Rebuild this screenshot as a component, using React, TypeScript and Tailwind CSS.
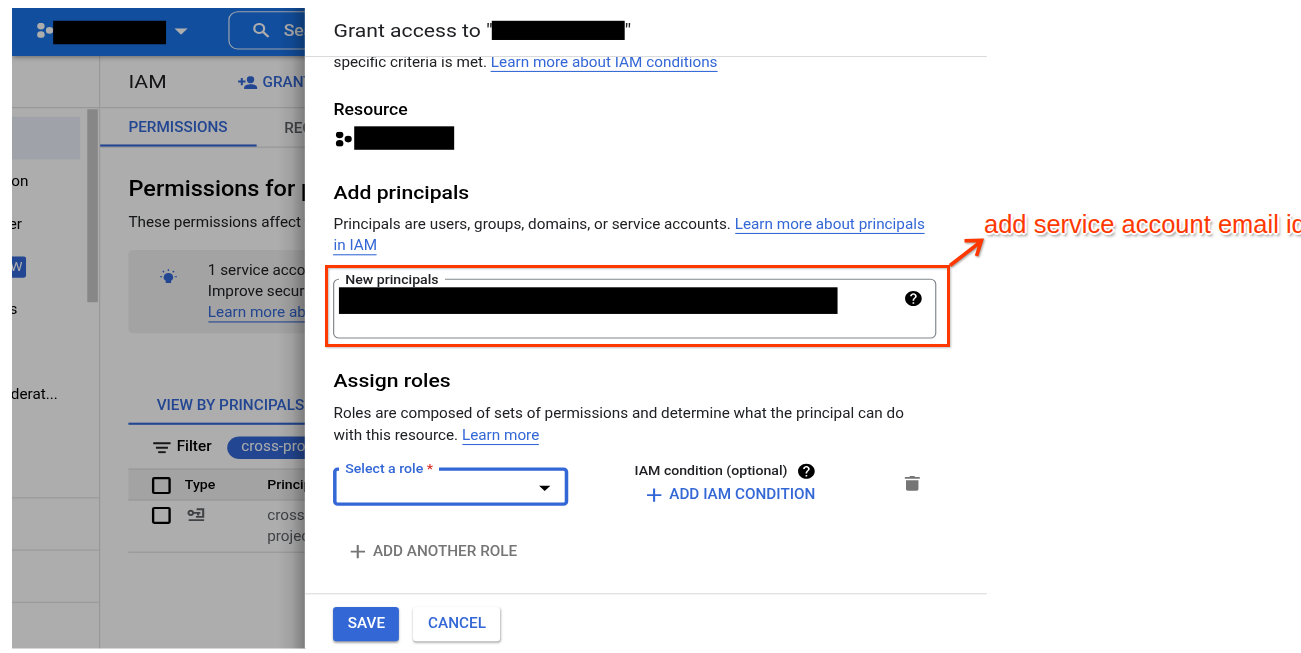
import type { ReactNode } from 'react';
import { MdHelp } from 'react-icons/md';

function ProjectIcon({ className }: { className: string }) {
  return (
    <svg viewBox="0 0 14 14" className={className} fill="currentColor">
      <circle cx="3.6" cy="3" r="3.2" />
      <circle cx="10.9" cy="7" r="3.1" />
      <circle cx="3.6" cy="11" r="3.2" />
    </svg>
  );
}

function Caret({ className }: { className: string }) {
  return (
    <svg viewBox="0 0 10 5" className={className} fill="currentColor" preserveAspectRatio="none">
      <path d="M0 0h10L5 5z" />
    </svg>
  );
}

function PlusIcon() {
  return (
    <svg viewBox="0 0 20 20" className="size-5" fill="none" stroke="currentColor" strokeWidth="1.8">
      <path d="M10 3.8v12.4M4 10h12.200" />
    </svg>
  );
}

function SearchIcon() {
  return (
    <svg viewBox="0 0 14 14" className="size-[14px]" fill="none" stroke="currentColor" strokeWidth="1.9">
      <circle cx="5.2" cy="5.2" r="4.2" />
      <path d="M8.3 8.3l4.9 4.9" strokeWidth="2.1" />
    </svg>
  );
}

function AddPersonIcon() {
  return (
    <svg viewBox="0 0 58 38" className="h-[12px] w-[16.5px]" preserveAspectRatio="none" fill="currentColor">
      <path d="M9 5h6v8h8v6h-8v8H9v-8H1v-6h8z" />
      <circle cx="38" cy="10" r="11" />
      <path d="M19 38v-4c0-7 11-10 19.500-10S58 27 58 34v4z" />
    </svg>
  );
}

function BulbIcon() {
  return (
    <svg viewBox="0 0 16 16" className="size-4 text-[#3367d6]" fill="currentColor">
      <path d="M8 4.600a4 4 0 0 0-2.300 7.300V14h4.600v-2.100A4 4 0 0 0 8 4.600z" />
      <path
        d="M8 1v1.600M3.200 2.700l1.100 1.200M12.800 2.700l-1.100 1.200M.8 8.100h1.800M13.400 8.100h1.800"
        stroke="currentColor"
        strokeWidth="1.1"
      />
    </svg>
  );
}

function FilterIcon() {
  return (
    <svg viewBox="0 0 15 11" className="h-[11px] w-[15px]" fill="none" stroke="currentColor" strokeWidth="1.9">
      <path d="M0 1.300h15M2.400 5.500h10.200M4.300 9.700h6.400" />
    </svg>
  );
}

function ServiceAccountIcon() {
  return (
    <svg viewBox="0 0 15 13" className="h-[13px] w-[15px] text-[#5f6368]" fill="none" stroke="currentColor" strokeWidth="1.8">
      <circle cx="3" cy="4.600" r="2" />
      <path d="M5 4.600h6.200M9.300 4.600v2.400M8 1.200h5.600v7.200H7.400M1.200 11.400h13.200" />
    </svg>
  );
}

function TrashIcon() {
  return (
    <svg viewBox="0 0 13 14" className="h-[14px] w-[13px] text-[#757575]" fill="currentColor">
      <path d="M0 1h4l.7-1h3.600L9 1h4v1.600H0zM1.200 4h10.600v8.300c0 .9-.7 1.600-1.600 1.600H2.800c-.9 0-1.600-.7-1.600-1.600z" />
    </svg>
  );
}

function Link({ children }: { children: ReactNode }) {
  return <a className="border-b border-[#3367d6] pb-px text-[#3367d6]">{children}</a>;
}

function TopBar() {
  return (
    <header className="relative z-10 flex h-[45px] w-[400px] shrink-0 items-start bg-[#1a73e8] text-white shadow-[0_1px_5px_rgba(0,0,0,0.5)]">
      <ProjectIcon className="mt-[14px] ml-[21px] size-[14px] shrink-0" />
      <div className="mt-[11.5px] h-[22.5px] w-[96px] shrink-0 bg-black" />
      <Caret className="mt-[19px] ml-[7px] h-[6px] w-[11.5px] shrink-0" />
      <div className="mt-[3px] ml-[34.5px] flex h-[36px] w-[200px] shrink-0 items-center rounded-lg border border-white/90 pl-[20px]">
        <SearchIcon />
        <span className="ml-[12px] text-[15px] font-medium">Search</span>
      </div>
    </header>
  );
}

function NavRow({ children, width }: { children?: ReactNode; width: string }) {
  return <div className={`flex h-10 items-center justify-end overflow-hidden pt-px text-[13px] ${width}`}>{children}</div>;
}

function SideNav() {
  return (
    <nav className="flex w-[75px] shrink-0 flex-col border-r border-[#e0e0e0]">
      <div className="h-[49px] border-b border-[#dcdcdc]" />
      <div className="flex h-[364.500px] justify-between pr-px">
        <div className="pt-2">
          <div className="h-10 w-[58px] bg-[#ebeffa]" />
          <NavRow width="w-[14px]">on</NavRow>
          <NavRow width="w-[8.5px]">er</NavRow>
          <NavRow width="w-[12px]">
            <span className="flex h-[20px] w-[24px] shrink-0 items-center justify-end rounded-[2px] bg-[#3367d6] pr-[3px] text-[12px] text-white">W</span>
          </NavRow>
          <NavRow width="w-[4.5px]">s</NavRow>
          <NavRow width="w-[39px]" />
          <NavRow width="w-[39px]">ederat...</NavRow>
        </div>
        <div className="mt-[1px] h-[181px] w-[9.5px] bg-[#c8c8c8]" />
      </div>
      <div className="h-[49px] border-t border-[#e0e0e0]" />
      <div className="h-[49px] border-t border-[#e0e0e0]" />
      <div className="grow border-t border-[#e0e0e0]" />
    </nav>
  );
}

function Checkbox() {
  return <span className="h-[16px] w-[16px] shrink-0 rounded-[2px] border-2 border-black" />;
}

function MainContent() {
  return (
    <main className="flex w-[320px] shrink-0 flex-col text-[13px] leading-5 whitespace-nowrap text-[#202124]">
      <div className="flex h-[49px] items-center border-b border-[#dcdcdc] pl-6">
        <h1 className="w-[93px] text-[18px]">IAM</h1>
        <div className="flex items-center gap-[4.5px] pt-px font-medium text-[#3367d6]">
          <AddPersonIcon />
          <span>GRANT ACCESS</span>
        </div>
      </div>
      <div className="flex h-[37px] border-b border-[#dcdcdc] font-medium">
        <div className="flex w-[132.5px] items-center border-b-2 border-[#3367d6] pt-[2px] pl-6 text-[#3367d6]">PERMISSIONS</div>
        <div className="flex items-center pt-px pl-6 text-[#5f6368]">RECOMMENDATIONS</div>
      </div>
      <div className="flex flex-col pl-6">
        <h2 className="mt-[26px] text-[20px] leading-6 font-medium text-black">Permissions for project</h2>
        <p className="mt-[10px]">These permissions affect this project</p>
        <div className="mt-[16px] flex h-[78px] rounded bg-[#f0f0f0] pt-[9px]">
          <div className="flex w-[67.500px] justify-center pt-[8px]">
            <BulbIcon />
          </div>
          <div>
            <p>1 service account</p>
            <p>Improve security</p>
            <p><Link>Learn more about</Link></p>
          </div>
        </div>
        <div className="mt-[48px] flex h-[38px] items-center border-b-2 border-[#3367d6] pt-[3px] pl-6 font-medium text-[#3367d6]">VIEW BY PRINCIPALS</div>
        <div className="flex h-[41px] items-center pt-[1.500px] pl-[20.5px]">
          <FilterIcon />
          <span className="ml-[5.5px] w-[42.500px] font-medium text-black">Filter</span>
          <span className="flex h-[21px] w-[160px] items-center rounded-full bg-[#3367d6] pl-[12.5px] text-white">cross-project</span>
        </div>
        <div className="flex h-[30px] items-center border-y border-[#dcdcdc] bg-[#f1f1f1] pl-[19.5px] text-[12px] font-medium text-black">
          <span className="flex pt-[2px]"><Checkbox /></span>
          <span className="ml-[12.500px] w-[70px]">Type</span>
          <span>Principal</span>
        </div>
        <div className="flex h-[49px] items-start border-b border-[#dcdcdc] pt-[4px] pl-[19.5px] text-[#5f6368]">
          <span className="flex pt-[2px]"><Checkbox /></span>
          <span className="ml-[14px] w-[68.500px] pt-[3px]"><ServiceAccountIcon /></span>
          <span>cross-project<br />project</span>
        </div>
      </div>
    </main>
  );
}

function GrantPanel() {
  return (
    <section className="absolute top-0 left-[249.400px] z-20 flex h-[601px] w-[579.500px] flex-col bg-white text-[13px] leading-5 whitespace-nowrap text-[#202124]">
      <header className="flex h-[46px] shrink-0 items-center border-b border-[#dadada] pr-6 pb-[3px] pl-6">
        <h2 className="text-[18px]">Grant access to &quot;</h2>
        <div className="-ml-[.500px] h-[18.5px] w-[112.500px] bg-black" />
        <span className="text-[18px]">&quot;</span>
      </header>
      <div className="flex h-[503px] shrink-0 flex-col overflow-hidden pl-6">
        <p className="-mt-[4.800px]">specific criteria is met. <Link>Learn more about IAM conditions</Link></p>
        <h4 className="mt-[24px] text-[15px] font-medium text-black">Resource</h4>
        <div className="mt-[6px] flex h-[22px] items-center text-black">
          <ProjectIcon className="mt-px ml-[1.5px] size-[14px]" />
          <div className="ml-[2px] h-[21.5px] w-[85.5px] bg-black" />
        </div>
        <h3 className="mt-[27.500px] text-[18px] leading-6 font-medium text-black">Add principals</h3>
        <p className="mt-[8.500px]">
          Principals are users, groups, domains, or service accounts. <Link>Learn more about principals</Link>
          <br />
          <Link>in IAM</Link>
        </p>
        <fieldset className="mt-[12.400px] h-[64px] w-[512.500px] rounded-[5px] border border-[#80868b] pl-[4px]">
          <legend className="px-[5px] text-[12px] leading-[18px] font-medium">New principals</legend>
          <div className="-mt-[1.300px] flex items-start justify-between pr-[10px]">
            <div className="h-[24.500px] w-[423.500px] bg-black" />
            <MdHelp className="mt-[1.500px] size-[17px] text-black" />
          </div>
        </fieldset>
        <h3 className="mt-[28.600px] text-[18px] leading-6 font-medium text-black">Assign roles</h3>
        <p className="mt-[8.700px]">
          Roles are composed of sets of permissions and determine what the principal can do
          <br />
          with this resource. <Link>Learn more</Link>
        </p>
        <div className="mt-[10.300px] flex">
          <fieldset className="mt-[1.500px] h-[44.500px] w-[199.5px] rounded-[4px] border-3 border-[#3367d6] pl-[2px]">
            <legend className="-mt-[1px] px-[5px] text-[12px] leading-[20px] font-medium text-[#3367d6]"><span className="relative -top-[1px]">Select a role <span className="text-[#d93025]">*</span></span></legend>
            <Caret className="mt-[5px] ml-[170px] h-[5px] w-[10px] text-black" />
          </fieldset>
          <div className="ml-[56.500px] w-[229.500px] pt-[3px]">
            <div className="flex h-[20px] items-center gap-[7.500px] text-[12px] font-medium">
              <span>IAM condition (optional)</span>
              <MdHelp className="size-[17px] text-black" />
            </div>
            <div className="mt-[2.500px] flex h-[20px] items-center gap-[3px] pl-[6.5px] font-medium text-[#3367d6]">
              <PlusIcon />
              <span>ADD IAM CONDITION</span>
            </div>
          </div>
          <div className="pt-[18px]"><TrashIcon /></div>
        </div>
        <div className="mt-[33px] flex h-[20px] items-center gap-[2.500px] pl-[11px] font-medium text-[#757575]">
          <PlusIcon />
          <span>ADD ANOTHER ROLE</span>
        </div>
      </div>
      <footer className="flex grow gap-[12px] border-t border-[#dadada] pt-[12px] pl-6 font-medium">
        <button className="h-[32px] w-[56px] rounded-[3px] bg-[#3367d6] text-white shadow-[0_1px_2px_rgba(0,0,0,0.35)]">SAVE</button>
        <button className="h-[32px] w-[74px] rounded-[3px] bg-white text-[#3367d6] shadow-[0_1px_2px_rgba(0,0,0,0.3)]">CANCEL</button>
      </footer>
    </section>
  );
}

function Annotation() {
  return (
    <>
      <div className="absolute top-[265px] left-[324.5px] z-30 h-[81.5px] w-[625px] border-[3.5px] border-[#ff3800] shadow-[1px_1px_2px_rgba(0,0,0,0.25),inset_1px_1px_2px_rgba(0,0,0,0.25)]" />
      <svg viewBox="0 0 44 36" className="absolute top-[234px] left-[945px] z-30 h-[36px] w-[44px] drop-shadow-[1px_1px_1px_rgba(0,0,0,0.4)]" fill="none" stroke="#ff3800" strokeWidth="3.6">
        <path d="M5 31.500L36 7.500M19.500 6.800L36.500 6.400L31.500 22" />
      </svg>
      <p className="absolute top-[209px] left-[984px] z-30 font-['Liberation_Sans',Arial,sans-serif] text-[25.5px] leading-[30px] whitespace-nowrap text-[#ff3800] [text-shadow:-1px_-1px_0_#fff,1px_-1px_0_#fff,-1px_1px_0_#fff,1px_1px_0_#fff,2px_0_0_#fff,-2px_0_0_#fff,0_2px_0_#fff,2px_3px_3px_rgba(0,0,0,0.5)]">
        add service account email id
      </p>
    </>
  );
}

export default function App() {
  return (
    <div className="relative h-[653px] w-[1301px] overflow-hidden bg-white pt-[8px] pl-[12px] font-['Roboto',sans-serif]">
      <div className="relative h-[601px] w-[829px] origin-top-left scale-x-[1.176] scale-y-[1.066] overflow-hidden">
        <div className="flex h-[601px] w-[249.500px] flex-col overflow-hidden bg-white">
          <TopBar />
          <div className="flex grow">
            <SideNav />
            <MainContent />
          </div>
        </div>
        <div className="absolute inset-y-0 left-0 z-10 flex w-[249.500px] justify-end bg-black/32">
          <div className="w-[24px] bg-linear-to-l from-black/30 via-black/8 to-transparent" />
        </div>
        <GrantPanel />
      </div>
      <Annotation />
    </div>
  );
}
